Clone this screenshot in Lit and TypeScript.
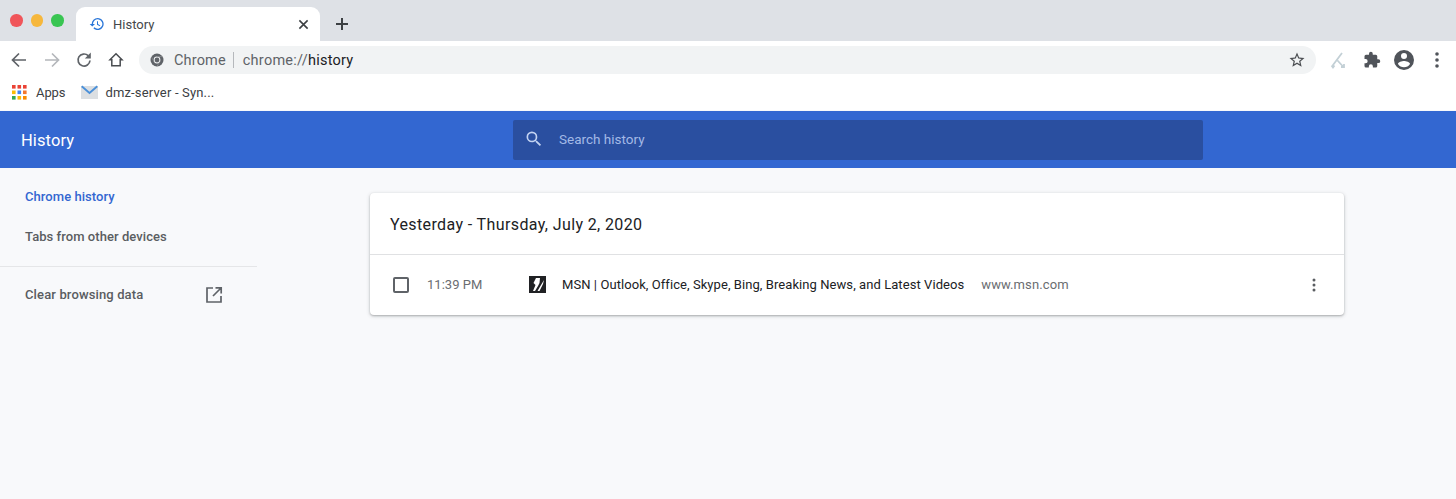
import { LitElement, html, svg, css } from "lit";
import { customElement } from "lit/decorators.js";

@customElement("app-root")
export class AppRoot extends LitElement {
  static styles = css`
    :host { display: flex; flex-direction: column; width: 1456px; height: 499px; overflow: hidden; background: #f8f9fb; font-family: Roboto, "Liberation Sans", sans-serif; color: #202124; }
    svg { display: block; flex: none; }
    .strip { height: 41px; background: #dee1e6; display: flex; align-items: flex-end; padding-left: 10px; box-sizing: border-box; }
    .lights { display: flex; gap: 8px; align-self: flex-start; margin-top: 14px; width: 66px; }
    .light { width: 12.5px; height: 12.5px; border-radius: 50%; }
    .tab { width: 244px; height: 34px; background: #fff; border-radius: 9px 9px 0 0; display: flex; align-items: center; box-sizing: border-box; padding: 0 11px 0 13px; font-size: 13px; color: #45474a; }
    .tab-title { flex: 1; margin-left: 8px; }
    .plus { margin-left: 15px; align-self: center; margin-top: 7px; }
    .toolbar { height: 37px; background: #fff; display: flex; align-items: center; box-sizing: border-box; padding: 1px 0 0 8px; }
    .navicon { width: 22px; height: 22px; margin-right: 11px; }
    .navicon.reload { margin-left: -1px; margin-right: 10px; }
    .omni { width: 1177px; height: 28px; margin-left: 1px; background: #f1f3f4; border-radius: 14px; display: flex; align-items: center; box-sizing: border-box; padding: 0 10px 0 11px; font-size: 14.5px; color: #5f6368; }
    .chrome-label { margin-left: 10px; letter-spacing: .15px; }
    .sep { width: 1px; height: 16px; background: #b5b8bc; margin: 0 9px 0 7px; }
    .url { letter-spacing: .25px; }
    .url b { font-weight: 400; color: #202124; }
    .spacer { flex: 1; }
    .tools { display: flex; align-items: center; margin-left: 12px; gap: 10px; }
    .tool-puzzle { margin-left: 5px; }
    .tool-avatar { margin-left: 1px; }
    .bookmarks { height: 32px; background: #fff; display: flex; align-items: center; box-sizing: border-box; padding: 0 0 4px 12px; font-size: 13px; color: #3c4043; }
    .apps { margin-right: 9px; }
    .apps-label { letter-spacing: -.1px; }
    .bm-gap { width: 16px; }
    .mail { margin-right: 7px; }
    .dmz { letter-spacing: .17px; }
    .header { margin-top: 1px; height: 57px; background: #3367d1; display: flex; align-items: center; flex: none; color: #fff; box-sizing: border-box; padding-left: 21px; }
    .header-title { width: 492px; font-size: 16.5px; letter-spacing: .1px; padding-top: 2px; }
    .search { width: 690px; height: 40px; background: #2a4fa0; border-radius: 2px; display: flex; align-items: center; box-sizing: border-box; padding: 0 0 2px 11px; font-size: 13.5px; color: #a3b9e6; }
    .search svg { margin-right: 15px; }
    .main { flex: 1; display: flex; }
    .side { width: 257px; flex: none; font-size: 13px; font-weight: 500; color: #5a5d61; letter-spacing: .06px; }
    .side-item { height: 41px; display: flex; align-items: center; box-sizing: border-box; padding-left: 25px; }
    .side-first { margin-top: 8px; color: #3367d1; }
    .side-second { height: 39px; }
    .side-rule { height: 1px; background: #e5e6e8; margin-top: 10px; }
    .side-clear { margin-top: 7px; justify-content: space-between; padding-right: 34px; letter-spacing: .13px; }
    .card { margin: 25px 0 0 113px; width: 974px; height: 122px; background: #fff; border-radius: 4px; box-shadow: 0 1px 2px rgba(60,64,67,.3), 0 1px 4px rgba(60,64,67,.2); display: flex; flex-direction: column; }
    .card-head { height: 60px; flex: none; display: flex; align-items: center; padding: 1px 0 0 20px; font-size: 16px; letter-spacing: .38px; border-bottom: 1px solid #e0e1e3; }
    .row { flex: 1; display: flex; align-items: center; font-size: 13px; padding: 0 0 1px 23px; }
    .check { width: 16px; height: 16px; box-sizing: border-box; border: 2px solid #5f6368; border-radius: 2px; flex: none; }
    .time { width: 102px; margin-left: 18px; color: #6a6d71; letter-spacing: .03px; }
    .fav { margin-right: 16px; }
    .title { letter-spacing: .07px; color: #202124; }
    .domain { margin-left: 17px; color: #6a6d71; letter-spacing: .1px; }
    .more { margin-right: 22px; }
  `;

  render() {
    return html`
      <div class="strip">
        <div class="lights">
          <div class="light" style="background:#f0555a"></div>
          <div class="light" style="background:#f6b73c"></div>
          <div class="light" style="background:#39c552"></div>
        </div>
        <div class="tab">
          <svg width="16" height="16" viewBox="0 0 24 24" fill="#2a76d8"><path d="M13 3a9 9 0 0 0-9 9H1l3.900 3.900L9 12H6a7 7 0 1 1 2.050 4.950l-1.420 1.420A9 9 0 1 0 13 3zm-1 5v5l4.250 2.520.77-1.280-3.520-2.090V8z"/></svg>
          <div class="tab-title">History</div>
          <svg width="11" height="11" viewBox="0 0 12 12" stroke="#3c4043" stroke-width="1.700" fill="none"><path d="M1.500 1.500l9 9M10.500 1.500l-9 9"/></svg>
        </div>
        <svg class="plus" width="14" height="14" viewBox="0 0 14 14" stroke="#3c4043" stroke-width="2" fill="none"><path d="M7 1v12M1 7h12"/></svg>
      </div>
      <div class="toolbar">
        <svg class="navicon" viewBox="0 0 22 22" fill="none" stroke="#5f6368" stroke-width="1.700"><path d="M18 11H5M11 4.500L4.500 11l6.500 6.500"/></svg>
        <svg class="navicon" viewBox="0 0 22 22" fill="none" stroke="#b4b7bb" stroke-width="1.700"><path d="M4 11h13M11 4.500l6.500 6.500-6.500 6.500"/></svg>
        <svg class="navicon reload" viewBox="0 0 22 22" fill="none" stroke="#5f6368" stroke-width="1.700"><path d="M17 11.500a6 6 0 1 1-1.800-4.800"/><path fill="#5f6368" stroke="none" d="M17.800 3.500v6h-6z"/></svg>
        <svg class="navicon" viewBox="0 0 22 22" fill="none" stroke="#4a4d51" stroke-width="1.500"><path d="M11 4.800L5 10.800h1.800v6h8.400v-6H17z"/></svg>
        <div class="omni">
          <svg width="14" height="14" viewBox="0 0 14 14"><circle cx="7" cy="7" r="6.500" fill="#5f6368"/><circle cx="7" cy="7" r="3.400" fill="#f1f3f4"/><circle cx="7" cy="7" r="2.400" fill="#5f6368"/><path d="M7 3.600h5.600" stroke="#8a8d91" stroke-width=".8"/><path d="M4 8.700L1.600 4.200M9.900 8.700L7 13.300" stroke="#8a8d91" stroke-width=".8"/></svg>
          <span class="chrome-label">Chrome</span>
          <div class="sep"></div>
          <span class="url">chrome://<b>history</b></span>
          <div class="spacer"></div>
          <svg width="18" height="18" viewBox="0 0 24 24" fill="#4a4d51"><path d="M22 9.240l-7.190-.620L12 2 9.190 8.630 2 9.240l5.460 4.730L5.820 21 12 17.270 18.180 21l-1.630-7.030L22 9.240zM12 15.400l-3.760 2.270 1-4.280-3.320-2.880 4.380-.380L12 6.100l1.710 4.040 4.380.380-3.320 2.880 1 4.280L12 15.400z"/></svg>
        </div>
        <div class="tools">
          <svg width="20" height="20" viewBox="0 0 20 20" fill="none" stroke="#c3d0d6" stroke-width="1.800"><path d="M14 3L5 15v2.500M9.500 10.500l6 6.500M3.500 15.500L5 17.500l1.500-2M13 17h3v-3"/></svg>
          <svg class="tool-puzzle" width="18" height="18" viewBox="0 0 24 24" fill="#50545a"><path d="M20.500 11H19V7a2 2 0 0 0-2-2h-4V3.500a2.500 2.500 0 0 0-5 0V5H4a2 2 0 0 0-2 2v3.800h1.500a2.700 2.700 0 0 1 0 5.400H2V20a2 2 0 0 0 2 2h3.800v-1.500a2.700 2.700 0 0 1 5.400 0V22H17a2 2 0 0 0 2-2v-4h1.500a2.500 2.500 0 0 0 0-5z"/></svg>
          <svg class="tool-avatar" width="24" height="24" viewBox="0 0 24 24" fill="#50545a"><path d="M12 2a10 10 0 1 0 0 20 10 10 0 0 0 0-20zm0 3a3 3 0 1 1 0 6 3 3 0 0 1 0-6zm0 14.200a7.200 7.200 0 0 1-6-3.220c.030-1.990 4-3.080 6-3.080s5.970 1.090 6 3.080a7.200 7.200 0 0 1-6 3.220z"/></svg>
          <svg width="22" height="22" viewBox="0 0 22 22" fill="#50545a"><circle cx="11" cy="5" r="1.800"/><circle cx="11" cy="11" r="1.800"/><circle cx="11" cy="17" r="1.800"/></svg>
        </div>
      </div>
      <div class="bookmarks">
        <svg class="apps" width="15" height="15" viewBox="0 0 15 15">
          ${["#ea4335","#ea4335","#ea4335","#fbbc04","#4285f4","#f4772e","#34a853","#fbbc04","#fb8c00"].map((c, i) => svg`<rect x=${(i % 3) * 5.5} y=${Math.floor(i / 3) * 5.5} width="3.600" height="3.600" fill=${c}></rect>`)}
        </svg>
        <span class="apps-label">Apps</span>
        <div class="bm-gap"></div>
        <svg class="mail" width="17" height="14" viewBox="0 0 17 14"><path fill="#dcdfe2" d="M0 1h17v13H0z"/><path fill="none" stroke="#4a90d9" stroke-width="1.800" d="M.7 1.200L8.500 8l7.800-6.800"/></svg>
        <span class="dmz">dmz-server - Syn...</span>
      </div>
      <div class="header">
        <div class="header-title">History</div>
        <div class="search">
          <svg width="20" height="20" viewBox="0 0 24 24" fill="#c3d3f2"><path d="M15.500 14h-.790l-.280-.270A6.470 6.470 0 0 0 16 9.500 6.500 6.500 0 1 0 9.500 16c1.610 0 3.090-.590 4.230-1.570l.270.280v.790l5 4.990L20.490 19l-4.990-5zm-6 0A4.500 4.500 0 1 1 9.500 5a4.500 4.500 0 0 1 0 9z"/></svg>
          <span>Search history</span>
        </div>
      </div>
      <div class="main">
        <div class="side">
          <div class="side-item side-first">Chrome history</div>
          <div class="side-item side-second">Tabs from other devices</div>
          <div class="side-rule"></div>
          <div class="side-item side-clear">
            <span>Clear browsing data</span>
            <svg width="18" height="18" viewBox="0 0 18 18" fill="none" stroke="#5f6368" stroke-width="1.700"><path d="M8 2H2v14h14v-6M10.500 1.800h5.700v5.700M16 2L8 10"/></svg>
          </div>
        </div>
        <div class="card">
          <div class="card-head">Yesterday - Thursday, July 2, 2020</div>
          <div class="row">
            <div class="check"></div>
            <div class="time">11:39 PM</div>
            <svg class="fav" width="17" height="17" viewBox="0 0 17 17"><path fill="#202124" d="M0 0h17v17H0z"/><path fill="#fff" d="M7 2h4l-.5 5-1.500 3-3 5H4l2.500-6-2-2zM15 4l-1 4-3.500 7h-2l3.500-6z"/></svg>
            <span class="title">MSN | Outlook, Office, Skype, Bing, Breaking News, and Latest Videos</span>
            <span class="domain">www.msn.com</span>
            <div class="spacer"></div>
            <svg class="more" width="16" height="16" viewBox="0 0 16 16" fill="#5a5d61"><circle cx="8" cy="3" r="1.500"/><circle cx="8" cy="8" r="1.500"/><circle cx="8" cy="13" r="1.500"/></svg>
          </div>
        </div>
      </div>
    `;
  }
}
